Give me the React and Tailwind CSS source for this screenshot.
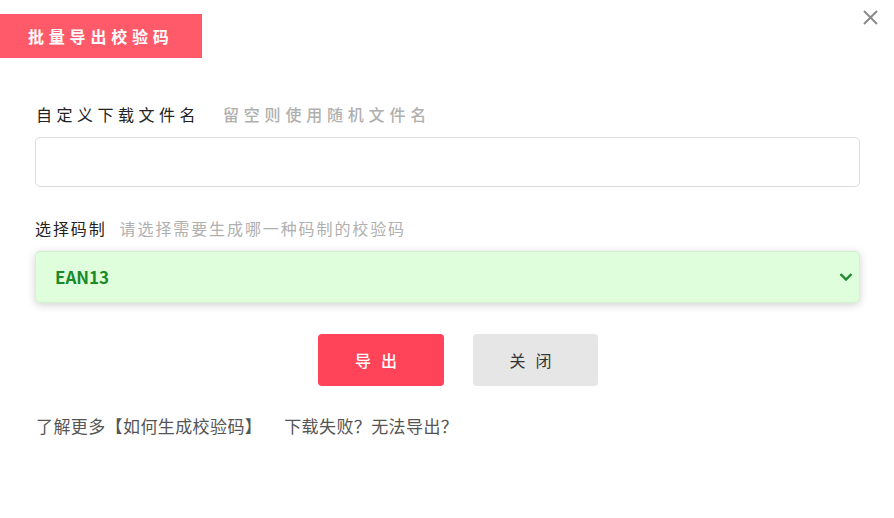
import React, { useState } from 'react';

const font = { fontFamily: '"Noto Sans CJK SC", "Noto Sans", sans-serif' };

export default function App() {
  const [name, setName] = useState('');

  return (
    <div className="relative w-[894px] h-[518px] bg-white overflow-hidden" style={font}>
      {/* close */}
      <button className="absolute left-[862px] top-[9px] w-[17px] h-[17px] text-[#8a8a8a]">
        <svg viewBox="0 0 17 17" className="w-[17px] h-[17px]" fill="none" stroke="currentColor" strokeWidth="2">
          <path d="M2 2 L15 15 M15 2 L2 15" />
        </svg>
      </button>

      {/* title tag */}
      <div className="mt-[14px] w-[202px] h-[44px] bg-[#ff5a6a] flex items-center pl-[28px] text-white text-[16px] font-bold tracking-[4.8px]">
        批量导出校验码
      </div>

      <div className="px-[35px]">
        {/* file name */}
        <div className="mt-[44px] h-[24px] flex items-center text-[16px] leading-[24px]">
          <span className="pl-[1px] text-[#222] tracking-[4.5px]">自定义下载文件名</span>
          <span className="ml-[23px] text-[#b0b0b0] font-medium tracking-[4.8px]">留空则使用随机文件名</span>
        </div>
        <input
          value={name}
          onChange={(e) => setName(e.target.value)}
          className="mt-[11px] block w-[825px] h-[50px] border border-[#dcdcdc] rounded-[5px] px-3 text-[16px] outline-none"
        />

        {/* code type */}
        <div className="mt-[29px] h-[24px] flex items-center text-[16px] leading-[24px] tracking-[1.9px]">
          <span className="text-[#222]">选择码制</span>
          <span className="ml-[13px] text-[#b0b0b0]">请选择需要生成哪一种码制的校验码</span>
        </div>
        <div className="mt-[11px] w-[825px] h-[52px] rounded-[5px] bg-[#dffedb] border border-[#d3f2cf] shadow-[0_2px_8px_rgba(0,0,0,0.18)] flex items-center justify-between pl-[19px] pr-[6px]">
          <span className="text-[17px] font-bold text-[#1a8a2a]">EAN13</span>
          <svg viewBox="0 0 14 10" className="w-[14px] h-[10px]" fill="none" stroke="#1a8a2a" strokeWidth="2.4">
            <path d="M1.5 2 L7 7.5 L12.5 2" />
          </svg>
        </div>

        {/* buttons */}
        <div className="mt-[31px] flex pl-[283px] gap-[29px]">
          <button className="w-[126px] h-[52px] rounded-[4px] bg-[#ff4358] text-white text-[16px] font-medium tracking-[10px] pl-[10px] pr-0">
            <span className="-ml-[10px]">导出</span>
          </button>
          <button className="w-[125px] h-[52px] rounded-[4px] bg-[#e6e6e6] text-[#333] text-[16px] tracking-[10px] pl-[10px]">
            <span className="-ml-[10px]">关闭</span>
          </button>
        </div>

        {/* footer links */}
        <div className="mt-[28px] h-[24px] flex items-center text-[17px] leading-[24px] text-[#555] tracking-[0.4px]">
          <span className="pl-[1px]">了解更多【如何生成校验码】</span>
          <span className="ml-[22px]">下载失败？无法导出？</span>
        </div>
      </div>
    </div>
  );
}
